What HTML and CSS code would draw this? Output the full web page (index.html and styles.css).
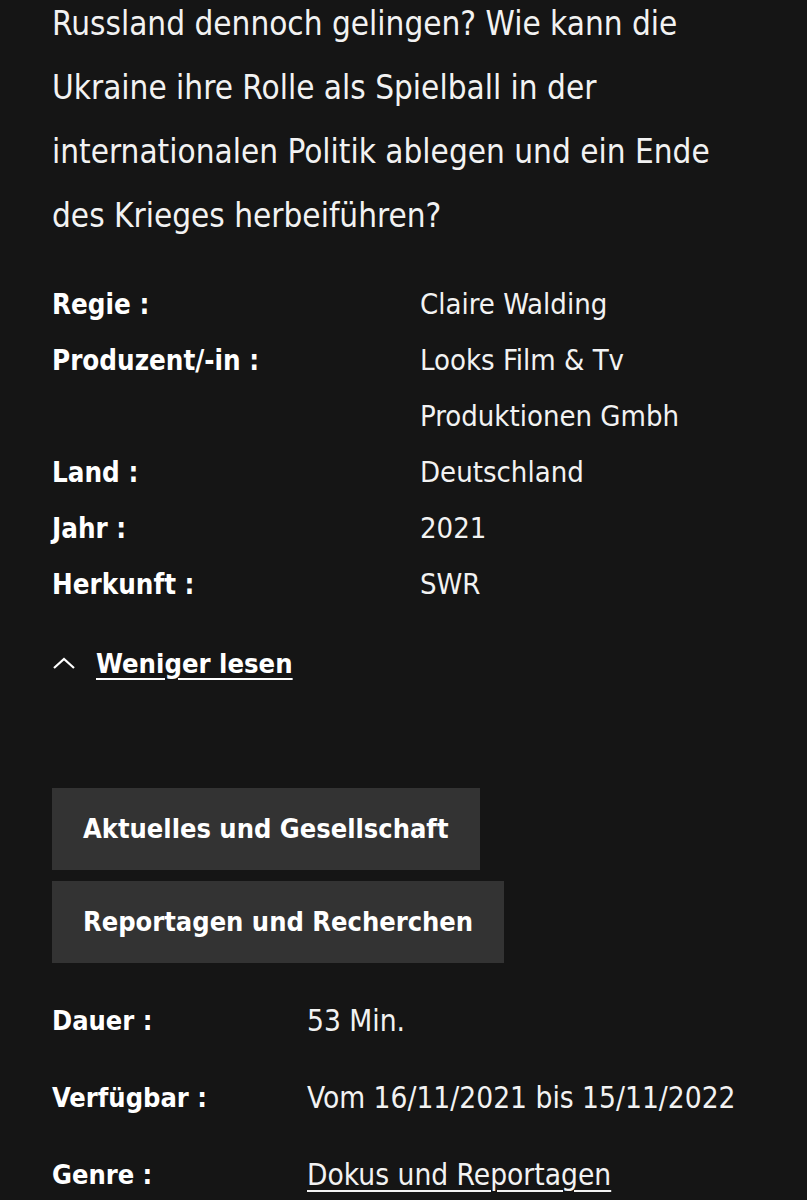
FILE: index.html
```html
<!DOCTYPE html>
<html lang="de">
<head>
<meta charset="utf-8">
<link rel="stylesheet" href="styles.css">
</head>
<body>
<main class="page">
  <p class="desc">Russland dennoch gelingen? Wie kann die Ukraine ihre Rolle als Spielball in der internationalen Politik ablegen und ein Ende des Krieges herbeiführen?</p>
  <dl class="credits">
    <dt>Regie :</dt><dd>Claire Walding</dd>
    <dt>Produzent/-in :</dt><dd>Looks Film &amp; Tv Produktionen Gmbh</dd>
    <dt>Land :</dt><dd>Deutschland</dd>
    <dt>Jahr :</dt><dd>2021</dd>
    <dt>Herkunft :</dt><dd>SWR</dd>
  </dl>
  <a class="toggle" href="#">
    <svg class="caret" width="24" height="14" viewBox="0 0 24 14"><path d="M2 12 L12 3 L22 12" fill="none" stroke="#fff" stroke-width="2.2"/></svg>
    <span class="toggle-label">Weniger lesen</span>
  </a>
  <div class="tags">
    <a class="tag" href="#">Aktuelles und Gesellschaft</a>
    <a class="tag" href="#">Reportagen und Recherchen</a>
  </div>
  <dl class="meta">
    <dt>Dauer :</dt><dd>53 Min.</dd>
    <dt>Verfügbar :</dt><dd>Vom 16/11/2021 bis 15/11/2022</dd>
    <dt>Genre :</dt><dd><a class="genre" href="#">Dokus und Reportagen</a></dd>
  </dl>
</main>
</body>
</html>
```
FILE: styles.css
```css
html, body {
  margin: 0;
  padding: 0;
  background: #151515;
  color: #f2f2f2;
  font-family: "DejaVu Sans Condensed", "Liberation Sans", sans-serif;
}
.page {
  padding: 0 52px;
  overflow: hidden;
  height: 1200px;
}
.desc {
  margin: -8px 0 0 0;
  font-size: 33px;
  line-height: 64px;
  max-width: 690px;
}
.credits {
  display: grid;
  grid-template-columns: 368px 1fr;
  margin: 28px 0 0 0;
  font-size: 29px;
  line-height: 56px;
}
.credits dt {
  font-weight: bold;
  color: #fff;
  font-size: 27.5px;
}
.credits dd {
  margin: 0;
  max-width: 300px;
}
.toggle {
  display: flex;
  align-items: center;
  gap: 20px;
  margin-top: 31px;
  color: #fff;
  text-decoration: none;
  height: 40px;
}
.toggle-label {
  font-size: 27.2px;
  font-weight: bold;
  text-decoration: underline;
  text-underline-offset: 5px;
  text-decoration-thickness: 2px;
}
.tags {
  display: flex;
  flex-direction: column;
  align-items: flex-start;
  gap: 11px;
  margin-top: 105px;
}
.tag {
  display: block;
  background: #333333;
  color: #fff;
  text-decoration: none;
  font-weight: bold;
  font-size: 27px;
  line-height: 82px;
  padding: 0 31px;
}
.meta {
  display: grid;
  grid-template-columns: 255px 1fr;
  row-gap: 37px;
  margin: 38px 0 0 0;
  font-size: 29.6px;
  line-height: 40px;
}
.meta dt {
  font-weight: bold;
  color: #fff;
  font-size: 27px;
}
.meta dd {
  margin: 0;
}
.genre {
  color: #f2f2f2;
  text-decoration: underline;
  text-underline-offset: 5px;
  text-decoration-thickness: 2px;
}
```
